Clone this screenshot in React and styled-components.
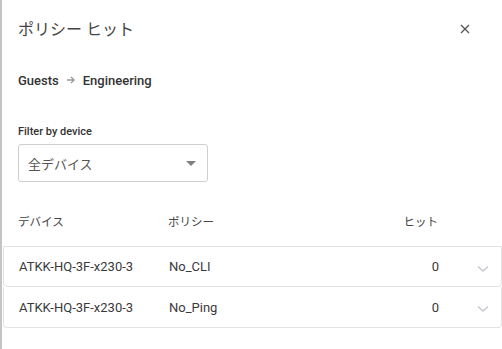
import React from "react";
import styled, { createGlobalStyle } from "styled-components";

const Global = createGlobalStyle`
  html, body { margin: 0; padding: 0; background: #fff; }
  body { font-family: Roboto, "Noto Sans CJK JP", sans-serif; color: #333; }
  * { box-sizing: border-box; }
`;

const Page = styled.div`
  width: 502px;
  height: 349px;
  border-left: 2px solid #c4c4c4;
  background: #fff;
  overflow: hidden;
  display: flex;
  flex-direction: column;
`;

const TitleBar = styled.div`
  height: 56px;
  display: flex;
  align-items: center;
  justify-content: space-between;
  padding: 0 31px 0 16px;
`;

const Title = styled.h1`
  margin: 0;
  font-size: 16px;
  font-weight: 400;
  color: #444;
  font-family: Roboto, "Noto Sans CJK JP", sans-serif;
`;

const CloseBtn = styled.button`
  border: 0;
  background: none;
  padding: 0;
  width: 12px;
  height: 12px;
  display: flex;
  align-items: center;
  justify-content: center;
  cursor: pointer;
  margin-top: 1px;
`;

const Route = styled.div`
  margin-top: 15px;
  padding-left: 16px;
  display: flex;
  align-items: center;
  gap: 7px;
  font-size: 13px;
  font-weight: 500;
  color: #333;
  height: 18px;
`;

const ArrowIcon = () => (
  <svg width="10" height="10" viewBox="0 0 10 10">
    <path d="M1 5 H8 M5 2 L8 5 L5 8" fill="none" stroke="#9a9a9a" strokeWidth="1.4" />
  </svg>
);

const FilterLabel = styled.div`
  margin-top: 36px;
  padding-left: 16px;
  font-size: 11px;
  font-weight: 500;
  color: #333;
  height: 14px;
  line-height: 14px;
`;

const Select = styled.div`
  margin: 5px 0 0 16px;
  width: 190px;
  height: 38px;
  border: 1px solid #cfcfcf;
  border-radius: 3px;
  display: flex;
  align-items: center;
  justify-content: space-between;
  padding: 0 11px 0 9px;
  font-size: 13px;
  color: #555;
`;

const Caret = styled.span`
  width: 0;
  height: 0;
  border-left: 5px solid transparent;
  border-right: 5px solid transparent;
  border-top: 5px solid #808080;
  margin-top: 1px;
`;

const Grid = styled.div`
  display: grid;
  grid-template-columns: 150px 150px 120px 1fr;
  align-items: center;
  padding-left: ${(p) => p.$pad}px;
`;

const HeadRow = styled(Grid)`
  margin-top: 26px;
  height: 26px;
  font-size: 11.5px;
  color: #444;
`;

const Spacer = styled.div`
  height: 12px;
`;

const RowCard = styled(Grid)`
  margin-left: 1px;
  height: 41px;
  border: 1px solid #e3e3e3;
  border-top: ${(p) => (p.$first ? "1px solid #e3e3e3" : "0")};
  border-radius: 0 0 4px 4px;
  font-size: 13px;
  color: #3a3a3a;
`;

const Cell = styled.div`
  text-align: ${(p) => (p.$right ? "right" : "left")};
  white-space: nowrap;
`;

const ChevronCell = styled.div`
  display: flex;
  justify-content: center;
  padding-left: 26px;
  padding-top: 4px;
`;

const Chevron = () => (
  <svg width="12" height="8" viewBox="0 0 12 8">
    <path d="M1 1.5 L6 6 L11 1.5" fill="none" stroke="#c4c8d0" strokeWidth="1.4" />
  </svg>
);

const CloseIcon = () => (
  <svg width="10" height="10" viewBox="0 0 10 10">
    <path d="M1 1 L9 9 M9 1 L1 9" stroke="#555" strokeWidth="1.3" />
  </svg>
);

const rows = [
  { device: "ATKK-HQ-3F-x230-3", policy: "No_CLI", hits: 0 },
  { device: "ATKK-HQ-3F-x230-3", policy: "No_Ping", hits: 0 },
];

export default function App() {
  return (
    <>
      <Global />
      <Page>
        <TitleBar>
          <Title>ポリシー ヒット</Title>
          <CloseBtn aria-label="close">
            <CloseIcon />
          </CloseBtn>
        </TitleBar>
        <Route>
          <span>Guests</span>
          <ArrowIcon />
          <span>Engineering</span>
        </Route>
        <FilterLabel>Filter by device</FilterLabel>
        <Select>
          <span>全デバイス</span>
          <Caret />
        </Select>
        <HeadRow $pad={16}>
          <Cell>デバイス</Cell>
          <Cell>ポリシー</Cell>
          <Cell $right>ヒット</Cell>
          <Cell />
        </HeadRow>
        <Spacer />
        {rows.map((r, i) => (
          <RowCard key={i} $pad={15} $first={i === 0}>
            <Cell>{r.device}</Cell>
            <Cell>{r.policy}</Cell>
            <Cell $right>{r.hits}</Cell>
            <ChevronCell>
              <Chevron />
            </ChevronCell>
          </RowCard>
        ))}
      </Page>
    </>
  );
}
